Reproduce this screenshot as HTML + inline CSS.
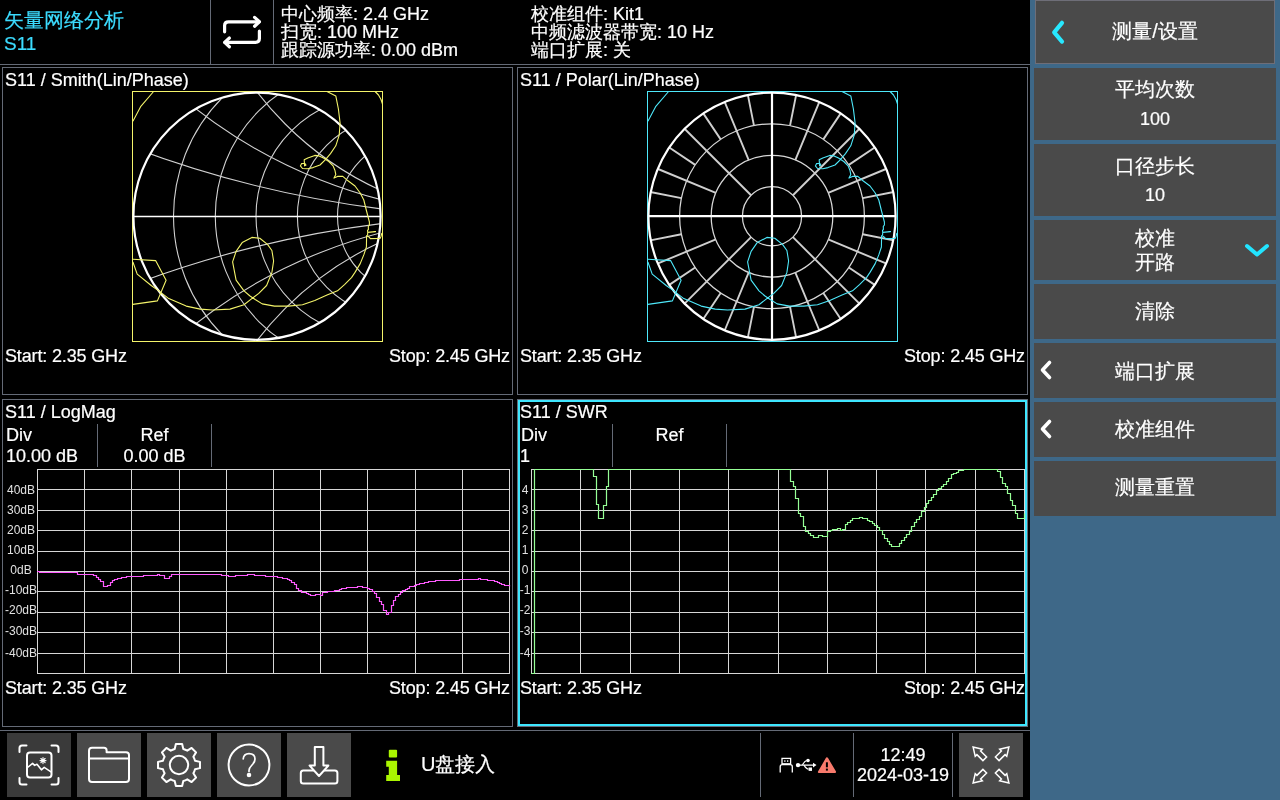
<!DOCTYPE html>
<html><head><meta charset="utf-8">
<style>
*{margin:0;padding:0;box-sizing:border-box}
html,body{width:1280px;height:800px;overflow:hidden;background:#000}
.t,.st,.sv,.lb{will-change:transform}
body{position:relative;font-family:"Liberation Sans",sans-serif;color:#fff;-webkit-text-stroke:0.2px currentColor}
.t{position:absolute;white-space:nowrap;line-height:1}
.hd{font-size:18px;line-height:18px}
.pt{font-size:18px;letter-spacing:-0.15px}
.btn{position:absolute;left:1034px;width:242px;background:#4a4a4a;color:#fff;text-align:center;font-size:19px}
.dv{font-size:18px}
.lb{position:absolute;width:40px;text-align:center;font-size:12px;line-height:12px;color:#e0e0e0;white-space:nowrap;-webkit-text-stroke:0}
.bb{position:absolute;top:733px;width:64px;height:64px;background:#3c3c3c}
svg{position:absolute;left:0;top:0}
.st{position:absolute;left:1034px;width:242px;text-align:center;font-size:20px;line-height:20px;white-space:nowrap}
.sv{position:absolute;left:1034px;width:242px;text-align:center;font-size:18px;line-height:18px;white-space:nowrap}
</style></head>
<body>
<!-- sidebar -->
<div style="position:absolute;left:1030px;top:0;width:250px;height:800px;background:#3e6888"></div>
<div class="btn" style="left:1035px;width:240px;top:0;height:64px;border:1px solid #6e6e78"></div>
<div class="btn" style="top:68px;height:72px"></div>
<div class="btn" style="top:144px;height:72px"></div>
<div class="btn" style="top:220px;height:60px"></div>
<div class="btn" style="top:284px;height:55px"></div>
<div class="btn" style="top:343px;height:55px"></div>
<div class="btn" style="top:402px;height:55px"></div>
<div class="btn" style="top:461px;height:55px"></div>
<div class="st" style="top:21px">测量/设置</div>
<div class="st" style="top:79px">平均次数</div>
<div class="sv" style="top:110px">100</div>
<div class="st" style="top:156px">口径步长</div>
<div class="sv" style="top:186px">10</div>
<div class="st" style="top:228px">校准</div>
<div class="st" style="top:252px">开路</div>
<div class="st" style="top:301px">清除</div>
<div class="st" style="top:361px">端口扩展</div>
<div class="st" style="top:419px">校准组件</div>
<div class="st" style="top:477px">测量重置</div>
<svg width="1280" height="800" viewBox="0 0 1280 800" style="pointer-events:none">
<g fill="none" stroke-linecap="round" stroke-linejoin="round">
<polyline points="1062,22.8 1054.2,32.3 1062,41.6" stroke="#28e8ff" stroke-width="4.2"/>
<polyline points="1247,246 1257,254.5 1267,246" stroke="#22e4ff" stroke-width="4"/>
<polyline points="1049.5,362.5 1042.5,370 1049.5,377.5" stroke="#fff" stroke-width="3.6"/>
<polyline points="1049.5,421.5 1042.5,429 1049.5,436.5" stroke="#fff" stroke-width="3.6"/>
</g>
</svg>

<!-- bottom buttons -->
<div class="bb" style="left:7px;background:#3a3a3a"></div>
<div class="bb" style="left:77px;background:#4a4a4a"></div>
<div class="bb" style="left:147px;background:#4a4a4a"></div>
<div class="bb" style="left:217px;background:#4a4a4a"></div>
<div class="bb" style="left:287px;background:#4a4a4a"></div>
<div class="bb" style="left:959px;background:#4a4a4a"></div>
<svg width="1280" height="800" viewBox="0 0 1280 800">
<g fill="none" stroke="#fff" stroke-width="2" stroke-linecap="round" stroke-linejoin="round">
<!-- screenshot icon -->
<g transform="translate(7,733)">
<path d="M19.5 12.5 H15 Q12.5 12.5 12.5 15 V19"/>
<path d="M44.5 12.5 H49 Q51.5 12.5 51.5 15 V19"/>
<path d="M12.5 45 V49 Q12.5 51.5 15 51.5 H19.5"/>
<path d="M51.5 45 V49 Q51.5 51.5 49 51.5 H44.5"/>
<rect x="20" y="19.5" width="24.5" height="25" rx="3"/>
<path d="M20.5 34.5 L25.6 30.4 L27.6 32.4 L30 31.2 L34.4 36.8 L37.2 34.4 L44 38.8" stroke-width="1.6"/>
<g stroke-width="1.1"><path d="M36 24.6 V30.6 M33 27.6 H39 M33.9 25.5 L38.1 29.7 M38.1 25.5 L33.9 29.7"/></g>
</g>
<!-- folder -->
<g transform="translate(77,733)">
<path d="M12 25.6 V46 Q12 49 15 49 H49 Q52 49 52 46 V22 Q52 19.2 49 19.2 H29.6 V17.5 Q29.6 14.8 27 14.8 H15 Q12 14.8 12 17.8 Z"/>
<path d="M12 25.6 H52"/>
</g>
<!-- gear -->
<g transform="translate(147,733)">
<circle cx="32" cy="32" r="9.2"/>
<path d="M27.70 15.97L28.87 11.03L35.13 11.03L36.30 15.97A16.6 16.6 0 0 1 40.30 17.62L44.61 14.96L49.04 19.39L46.38 23.70A16.6 16.6 0 0 1 48.03 27.70L52.97 28.87L52.97 35.13L48.03 36.30A16.6 16.6 0 0 1 46.38 40.30L49.04 44.61L44.61 49.04L40.30 46.38A16.6 16.6 0 0 1 36.30 48.03L35.13 52.97L28.87 52.97L27.70 48.03A16.6 16.6 0 0 1 23.70 46.38L19.39 49.04L14.96 44.61L17.62 40.30A16.6 16.6 0 0 1 15.97 36.30L11.03 35.13L11.03 28.87L15.97 27.70A16.6 16.6 0 0 1 17.62 23.70L14.96 19.39L19.39 14.96L23.70 17.62A16.6 16.6 0 0 1 27.70 15.97Z"/>
</g>
<!-- help -->
<g transform="translate(217,733)">
<circle cx="32" cy="32" r="20.4"/>
<path d="M26.2 26 Q26.7 20.6 32 20.6 Q38 20.6 38 26 Q38 29 35 32 Q32 35 32 37.5 V38.5" stroke-width="1.7"/>
<circle cx="32" cy="42" r="1.3" fill="#fff"/>
</g>
<!-- download -->
<g transform="translate(287,733)">
<rect x="13.8" y="37.4" width="36.6" height="13" rx="2.5"/>
<path d="M27.8 14 H36.4 V32.6 H41.4 L32 43 L22.6 32.6 H27.8 Z" fill="#4a4a4a"/>
</g>
</g>
<!-- info i -->
<g fill="#aaf500">
<rect x="388.8" y="749.8" width="8.3" height="7.7" rx="1"/>
<path d="M386.2 760.8 H397.1 V775 H400 V781 H386.2 V775 H388.8 V766.8 H386.2 Z"/>
</g>
<!-- usb drive -->
<g fill="none" stroke="#fff" stroke-width="1.3">
<rect x="782" y="758.4" width="8.6" height="5.4"/>
<path d="M780.2 772.5 V766.8 Q780.2 764.7 782.3 764.7 H790.2 Q792.3 764.7 792.3 766.8 V772.5"/>
</g>
<g fill="#fff">
<rect x="784.2" y="760.3" width="1.3" height="1.5"/><rect x="787" y="760.3" width="1.3" height="1.5"/>
<circle cx="798" cy="765.1" r="2.2"/>
<path d="M798 764.5 H813 V762.8 L816.5 765.1 L813 767.4 V765.7 H798 Z"/>
<path d="M802.5 765.1 Q804.5 761 806.5 760.6" fill="none" stroke="#fff" stroke-width="1.2"/>
<path d="M804 765.1 Q806.5 769.2 808.5 769.2" fill="none" stroke="#fff" stroke-width="1.2"/>
<circle cx="808" cy="760.5" r="1.8"/>
<rect x="808.6" y="767.5" width="3.4" height="3.4"/>
</g>
<path d="M826.9 757.2 Q827.6 757.2 828.2 758.3 L836 771.6 Q836.3 773 835 773 H818.8 Q817.5 773 818 771.6 L825.7 758.3 Q826.2 757.2 826.9 757.2 Z" fill="#f87a6c"/>
<rect x="825.9" y="762.3" width="2" height="5" fill="#000"/>
<rect x="825.9" y="768.6" width="2" height="2" fill="#000"/>
<!-- loop icon -->
<g fill="none" stroke="#fff" stroke-width="3.2" stroke-linecap="round" stroke-linejoin="round">
<path d="M224.6 31.8 V25.5 Q224.6 21.8 228.5 21.8 H259"/>
<path d="M254.6 17.4 L259.4 21.8 L254.6 26.2"/>
<path d="M259.4 31.2 V38.6 Q259.4 42.4 255.5 42.4 H225"/>
<path d="M229.4 38 L224.6 42.4 L229.4 46.8"/>
</g>
<!-- fullscreen arrows -->
<g fill="none" stroke="#fff" stroke-width="1.5" stroke-linejoin="miter">
<polygon points="982.94,760.62 976.93,754.61 975.23,756.30 973.11,747.11 982.30,749.23 980.61,750.93 986.62,756.94"/><polygon points="995.38,756.94 1001.39,750.93 999.70,749.23 1008.89,747.11 1006.77,756.30 1005.07,754.61 999.06,760.62"/><polygon points="986.62,773.06 980.61,779.07 982.30,780.77 973.11,782.89 975.23,773.70 976.93,775.39 982.94,769.38"/><polygon points="999.06,769.38 1005.07,775.39 1006.77,773.70 1008.89,782.89 999.70,780.77 1001.39,779.07 995.38,773.06"/>
</g>
</svg>
<div class="t" style="left:421px;top:754px;font-size:20px">U盘接入</div>
<div class="t" style="left:853px;width:100px;text-align:center;top:746px;font-size:18px">12:49</div>
<div class="t" style="left:853px;width:100px;text-align:center;top:766px;font-size:18px">2024-03-19</div>

<svg width="1280" height="800" viewBox="0 0 1280 800">
<g stroke="#646a76" stroke-width="1" fill="none">
<!-- header lines -->
<line x1="0" y1="64.5" x2="1030" y2="64.5"/>
<line x1="210.5" y1="0" x2="210.5" y2="64"/>
<line x1="273.5" y1="0" x2="273.5" y2="64"/>
<!-- panels -->
<rect x="2.5" y="67.5" width="510" height="327"/>
<rect x="517.5" y="67.5" width="510" height="327"/>
<rect x="2.5" y="399.5" width="510" height="327"/>
<rect x="517.5" y="399.5" width="510" height="327"/>
<!-- bottom line -->
<line x1="0" y1="730.5" x2="1030" y2="730.5"/>
<line x1="760.5" y1="733" x2="760.5" y2="797"/>
<line x1="853.5" y1="733" x2="853.5" y2="797"/>
<line x1="952.5" y1="733" x2="952.5" y2="797"/>
<!-- div/ref separators -->
<line x1="97.5" y1="424" x2="97.5" y2="467"/>
<line x1="211.5" y1="424" x2="211.5" y2="467"/>
<line x1="612.5" y1="424" x2="612.5" y2="467"/>
<line x1="726.5" y1="424" x2="726.5" y2="467"/>
</g>
<rect x="519" y="401" width="507" height="324" fill="none" stroke="#3ee6ff" stroke-width="2"/>
<!--CHARTS-->
<defs><clipPath id="cs"><circle cx="257" cy="216.2" r="124"/></clipPath>
<clipPath id="bs"><rect x="132" y="91" width="251" height="251"/></clipPath>
<clipPath id="bp"><rect x="647" y="91" width="251" height="251"/></clipPath></defs>
<rect x="132.5" y="91.5" width="250" height="250" fill="none" stroke="#f4f46a" stroke-width="1"/>
<g clip-path="url(#cs)" fill="none" stroke="#d0d0d0" stroke-width="1.1">
<circle cx="342.0" cy="216.2" r="168.5"/>
<circle cx="364.6" cy="216.2" r="149.3"/>
<circle cx="376.7" cy="216.2" r="120.7"/>
<circle cx="398.0" cy="216.2" r="100.6"/>
<circle cx="416.8" cy="216.2" r="79.3"/>
<circle cx="516.3" cy="-875.5" r="1092.6"/>
<circle cx="516.3" cy="1307.9" r="1092.6"/>
<circle cx="507.3" cy="-291.5" r="507.1"/>
<circle cx="507.3" cy="723.9" r="507.1"/>
<circle cx="517.2" cy="-108.0" r="328.1"/>
<circle cx="517.2" cy="540.4" r="328.1"/>
</g>
<line x1="133" y1="216.5" x2="381" y2="216.5" stroke="#fff" stroke-width="1.6"/>
<circle cx="257" cy="216.2" r="123.6" fill="none" stroke="#fff" stroke-width="2.2"/>
<g clip-path="url(#bs)">
<polyline points="327.0,91.5 335.8,95.9 338.4,109.0 340.1,123.0 339.2,135.2 335.8,145.8 330.5,153.6 325.2,159.8 320.0,165.0 313.0,167.6 307.8,168.8 302.5,168.5 300.4,165.9 301.6,163.6 304.6,163.2 306.0,165.0 304.6,165.9 304.2,159.8 307.8,158.0 314.8,155.4 319.1,155.9 323.5,158.0 328.8,161.5 333.1,165.9 334.9,170.2 335.8,174.6 334.0,178.1 337.5,176.4 342.8,176.4 348.0,180.8 355.0,186.0 360.2,193.0 363.8,200.0 366.4,210.5 369.4,222.0 369.4,225.0 368.3,226.4 368.4,229.5 367.5,230.4 367.7,232.3 375.5,231.6 367.7,232.4 367.6,235.1 366.6,235.8 366.4,247.0 363.8,254.9 360.2,263.6 355.0,272.4 351.5,277.6 344.5,284.6 337.5,290.8 327.0,295.1 314.8,300.4 302.5,304.8 288.5,306.1 274.5,306.1 262.2,303.9 255.2,299.5 250.0,296.0 244.0,290.8 236.1,280.2 232.6,261.9 236.1,251.4 242.2,242.6 251.9,237.4 259.8,238.2 267.5,244.4 271.9,250.5 273.6,261.0 271.9,272.4 266.6,285.5 258.8,293.4 251.8,298.6 244.0,304.8 230.0,309.1 212.5,310.0 200.2,309.1 186.2,306.1 168.8,298.6 157.4,289.9 151.2,285.5 137.2,274.1 132.9,262.0" fill="none" stroke="#f4f46a" stroke-width="1.1" stroke-linejoin="round"/>
<polyline points="132.9,259.2 155.6,260.6 166.1,280.2 157.4,300.9 132.9,304.4" fill="none" stroke="#f4f46a" stroke-width="1.1" stroke-linejoin="round"/>
<polyline points="153.6,91.5 140.6,106.7 132.9,121.3" fill="none" stroke="#f4f46a" stroke-width="1.1" stroke-linejoin="round"/>
<polyline points="375.1,91.5 378.5,95.0 381.0,99.5 382.5,104.0" fill="none" stroke="#f4f46a" stroke-width="1.1" stroke-linejoin="round"/>
<polyline points="367.5,236.0 369.4,237.3 370.3,238.6 380.0,238.4 381.0,236.4 381.9,233.0" fill="none" stroke="#f4f46a" stroke-width="1.1" stroke-linejoin="round"/>
</g>
<rect x="647.5" y="91.5" width="250" height="250" fill="none" stroke="#4ee8fa" stroke-width="1"/>
<g fill="none" stroke="#d8d8d8" stroke-width="1.25">
<circle cx="772.0" cy="216.2" r="29.6"/>
<circle cx="772.0" cy="216.2" r="60.8"/>
<circle cx="772.0" cy="216.2" r="92.4"/>
</g>
<path d="M862.62 198.17L893.62 192.01M828.17 192.93L886.56 168.75M848.83 164.87L875.10 147.31M792.93 195.27L859.68 128.52M823.33 139.37L840.89 113.10M795.27 160.03L819.45 101.64M790.03 125.58L796.19 94.58M753.97 125.58L747.81 94.58M748.73 160.03L724.55 101.64M720.67 139.37L703.11 113.10M751.07 195.27L684.32 128.52M695.17 164.87L668.90 147.31M715.83 192.93L657.44 168.75M681.38 198.17L650.38 192.01M681.38 234.23L650.38 240.39M715.83 239.47L657.44 263.65M695.17 267.53L668.90 285.09M751.07 237.13L684.32 303.88M720.67 293.03L703.11 319.30M748.73 272.37L724.55 330.76M753.97 306.82L747.81 337.82M790.03 306.82L796.19 337.82M795.27 272.37L819.45 330.76M823.33 293.03L840.89 319.30M792.93 237.13L859.68 303.88M848.83 267.53L875.10 285.09M828.17 239.47L886.56 263.65M862.62 234.23L893.62 240.39" stroke="#cfcfcf" stroke-width="1.9" fill="none"/>
<path d="M648 216.2H896M772 92V340" stroke="#fff" stroke-width="2.2"/>
<circle cx="772" cy="216.2" r="123.6" fill="none" stroke="#fff" stroke-width="2.2"/>
<g clip-path="url(#bp)">
<polyline points="842.0,91.5 850.8,95.9 853.4,109.0 855.1,123.0 854.2,135.2 850.8,145.8 845.5,153.6 840.2,159.8 835.0,165.0 828.0,167.6 822.8,168.8 817.5,168.5 815.4,165.9 816.6,163.6 819.6,163.2 821.0,165.0 819.6,165.9 819.2,159.8 822.8,158.0 829.8,155.4 834.1,155.9 838.5,158.0 843.8,161.5 848.1,165.9 849.9,170.2 850.8,174.6 849.0,178.1 852.5,176.4 857.8,176.4 863.0,180.8 870.0,186.0 875.2,193.0 878.8,200.0 881.4,210.5 884.4,222.0 884.4,225.0 883.3,226.4 883.4,229.5 882.5,230.4 882.7,232.3 890.5,231.6 882.7,232.4 882.6,235.1 881.6,235.8 881.4,247.0 878.8,254.9 875.2,263.6 870.0,272.4 866.5,277.6 859.5,284.6 852.5,290.8 842.0,295.1 829.8,300.4 817.5,304.8 803.5,306.1 789.5,306.1 777.2,303.9 770.2,299.5 765.0,296.0 759.0,290.8 751.1,280.2 747.6,261.9 751.1,251.4 757.2,242.6 766.9,237.4 774.8,238.2 782.5,244.4 786.9,250.5 788.6,261.0 786.9,272.4 781.6,285.5 773.8,293.4 766.8,298.6 759.0,304.8 745.0,309.1 727.5,310.0 715.2,309.1 701.2,306.1 683.8,298.6 672.4,289.9 666.2,285.5 652.2,274.1 647.9,262.0" fill="none" stroke="#4ee8fa" stroke-width="1.1" stroke-linejoin="round"/>
<polyline points="647.9,259.2 670.6,260.6 681.1,280.2 672.4,300.9 647.9,304.4" fill="none" stroke="#4ee8fa" stroke-width="1.1" stroke-linejoin="round"/>
<polyline points="668.6,91.5 655.6,106.7 647.9,121.3" fill="none" stroke="#4ee8fa" stroke-width="1.1" stroke-linejoin="round"/>
<polyline points="890.1,91.5 893.5,95.0 896.0,99.5 897.5,104.0" fill="none" stroke="#4ee8fa" stroke-width="1.1" stroke-linejoin="round"/>
<polyline points="882.5,236.0 884.4,237.3 885.3,238.6 895.0,238.4 896.0,236.4 896.9,233.0" fill="none" stroke="#4ee8fa" stroke-width="1.1" stroke-linejoin="round"/>
</g>
<path d="M37.5 469.0V674.0M84.5 469.0V674.0M131.5 469.0V674.0M179.5 469.0V674.0M226.5 469.0V674.0M273.5 469.0V674.0M320.5 469.0V674.0M367.5 469.0V674.0M415.5 469.0V674.0M462.5 469.0V674.0M509.5 469.0V674.0M37.0 469.5H510.0M37.0 489.5H510.0M37.0 510.5H510.0M37.0 530.5H510.0M37.0 551.5H510.0M37.0 571.5H510.0M37.0 591.5H510.0M37.0 612.5H510.0M37.0 632.5H510.0M37.0 653.5H510.0M37.0 673.5H510.0" stroke="#d6d6d6" stroke-width="1" fill="none"/>
<path d="M531.5 469.0V674.0M580.5 469.0V674.0M630.5 469.0V674.0M679.5 469.0V674.0M728.5 469.0V674.0M778.5 469.0V674.0M827.5 469.0V674.0M876.5 469.0V674.0M925.5 469.0V674.0M975.5 469.0V674.0M1024.5 469.0V674.0M531.0 469.5H1025.0M531.0 489.5H1025.0M531.0 510.5H1025.0M531.0 530.5H1025.0M531.0 551.5H1025.0M531.0 571.5H1025.0M531.0 591.5H1025.0M531.0 612.5H1025.0M531.0 632.5H1025.0M531.0 653.5H1025.0M531.0 673.5H1025.0" stroke="#d6d6d6" stroke-width="1" fill="none"/>
<path d="M37.0 571.5H39.5V572.5H41.5H44.5H46.5H48.5H51.5H53.5H55.5H58.5H60.5H62.5H65.5H67.5H70.5H72.5H74.5H77.5V574.5H79.5H81.5H84.5H86.5H88.5H91.5H93.5V575.5H96.5V577.5H98.5V579.5H100.5V581.5H103.5V586.5H105.5H107.5V585.5H110.5V582.5H112.5V580.5H114.5V579.5H117.5V578.5H119.5H121.5V577.5H124.5H126.5V576.5H129.5H131.5H133.5H136.5H138.5H140.5H143.5V575.5H145.5H147.5H150.5H152.5H155.5H157.5V574.5H159.5V575.5H162.5H164.5V578.5H166.5H169.5V576.5H171.5V574.5H173.5H176.5H178.5H180.5H183.5H185.5H188.5H190.5H192.5H195.5H197.5H199.5H202.5H204.5H206.5H209.5H211.5H214.5H216.5H218.5H221.5V575.5H223.5H225.5H228.5V576.5H230.5H232.5H235.5V575.5H237.5H239.5H242.5H244.5H247.5V574.5H249.5H251.5H254.5V575.5H256.5H258.5H261.5H263.5H265.5V576.5H268.5H270.5H273.5H275.5H277.5V577.5H280.5H282.5V578.5H284.5H287.5V579.5H289.5V580.5H291.5V582.5H294.5V584.5H296.5V588.5H298.5V590.5H301.5V592.5H303.5H306.5V593.5H308.5V594.5H310.5V595.5H313.5H315.5V594.5H317.5H320.5V595.5H322.5V592.5H324.5H327.5V591.5H329.5H332.5H334.5V590.5H336.5H339.5V589.5H341.5V588.5H343.5H346.5V587.5H348.5H350.5H353.5H355.5H357.5V586.5H360.5H362.5V587.5H365.5H367.5V588.5H369.5V589.5H372.5V591.5H374.5V593.5H376.5V597.5H379.5V601.5H381.5V604.5H383.5V610.5H386.5V614.5H388.5V612.5H391.5V605.5H393.5V600.5H395.5V596.5H398.5V594.5H400.5V592.5H402.5V590.5H405.5V589.5H407.5V588.5H409.5V586.5H412.5H414.5V585.5H416.5V584.5H419.5V583.5H421.5H424.5V582.5H426.5H428.5V581.5H431.5H433.5H435.5V580.5H438.5H440.5H442.5H445.5H447.5H450.5H452.5H454.5H457.5H459.5V579.5H461.5H464.5H466.5H468.5H471.5H473.5H475.5H478.5V578.5H480.5V579.5H483.5H485.5H487.5V580.5H490.5H492.5H494.5V581.5H497.5V582.5H499.5V583.5H501.5V584.5H504.5V585.5H506.5H509.5V586.5" stroke="#ff5cff" stroke-width="1.2" fill="none"/>
<path d="M531 673.5H534.5V469.5H593.5V476.5H596.5V504.5H598.5V518.5H603.5V505.5H606.5V486.5H608.5V469.5H610.5H613.5H615.5H618.5H620.5H623.5H625.5H628.5H630.5H633.5H635.5H638.5H640.5H643.5H645.5H647.5H650.5H652.5H655.5H657.5H660.5H662.5H665.5H667.5H670.5H672.5H675.5H677.5H679.5H682.5H684.5H687.5H689.5H692.5H694.5H697.5H699.5H702.5H704.5H707.5H709.5H712.5H714.5H716.5H719.5H721.5H724.5H726.5H729.5H731.5H734.5H736.5H739.5H741.5H744.5H746.5H749.5H751.5H753.5H756.5H758.5H761.5H763.5H766.5H768.5H771.5H773.5H776.5H778.5H781.5H783.5H785.5H788.5H790.5V481.5H793.5V486.5H795.5V498.5H798.5V513.5H800.5V516.5H803.5V526.5H805.5V531.5H808.5V533.5H810.5V535.5H813.5V537.5H815.5H818.5V535.5H820.5H822.5V536.5H825.5H827.5V531.5H830.5V530.5H832.5V529.5H835.5H837.5V528.5H840.5V530.5H842.5V529.5H845.5V524.5H847.5V522.5H850.5V520.5H852.5V518.5H855.5H857.5H859.5V517.5H862.5V518.5H864.5H867.5V520.5H869.5V521.5H872.5V523.5H874.5V525.5H877.5V527.5H879.5V530.5H882.5V534.5H884.5V538.5H887.5V541.5H889.5V544.5H891.5V546.5H894.5H896.5H899.5V543.5H901.5V540.5H904.5V537.5H906.5V534.5H909.5V531.5H911.5V526.5H914.5V522.5H916.5V519.5H919.5V516.5H921.5V511.5H924.5V507.5H926.5V503.5H928.5V500.5H931.5V497.5H933.5V494.5H936.5V490.5H938.5V488.5H941.5V486.5H943.5V484.5H946.5V481.5H948.5V478.5H951.5V474.5H953.5V473.5H956.5V472.5H958.5V470.5H960.5H963.5V469.5H965.5H968.5H970.5H973.5H975.5H978.5H980.5H983.5H985.5H988.5H990.5H993.5H995.5H997.5V471.5H1000.5V477.5H1002.5V483.5H1005.5V486.5H1007.5V493.5H1010.5V500.5H1012.5V505.5H1015.5V513.5H1017.5V518.5H1020.5H1022.5H1024.5V513.5" stroke="#96ff96" stroke-width="1.2" fill="none"/>
<!--/CHARTS-->
</svg>

<!-- header text -->
<div class="t" style="left:4px;top:10px;font-size:20px;color:#3cdcff">矢量网络分析</div>
<div class="t" style="left:4px;top:34px;font-size:19px;color:#3cdcff">S11</div>
<div class="t hd" style="left:281px;top:5px">中心频率: 2.4 GHz</div>
<div class="t hd" style="left:281px;top:23px">扫宽: 100 MHz</div>
<div class="t hd" style="left:281px;top:41px">跟踪源功率: 0.00 dBm</div>
<div class="t hd" style="left:531px;top:5px">校准组件: Kit1</div>
<div class="t hd" style="left:531px;top:23px">中频滤波器带宽: 10 Hz</div>
<div class="t hd" style="left:531px;top:41px">端口扩展: 关</div>

<!-- panel text -->
<div class="t pt" style="left:5px;top:71px;letter-spacing:0">S11 / Smith(Lin/Phase)</div>
<div class="t pt" style="left:520px;top:71px;letter-spacing:0">S11 / Polar(Lin/Phase)</div>
<div class="t pt" style="left:5px;top:403px;letter-spacing:0">S11 / LogMag</div>
<div class="t pt" style="left:520px;top:403px;letter-spacing:0">S11 / SWR</div>
<div class="t pt" style="left:5px;top:347px">Start: 2.35 GHz</div>
<div class="t pt" style="right:770px;top:347px">Stop: 2.45 GHz</div>
<div class="t pt" style="left:520px;top:347px">Start: 2.35 GHz</div>
<div class="t pt" style="right:255px;top:347px">Stop: 2.45 GHz</div>
<div class="t pt" style="left:5px;top:679px">Start: 2.35 GHz</div>
<div class="t pt" style="right:770px;top:679px">Stop: 2.45 GHz</div>
<div class="t pt" style="left:520px;top:679px">Start: 2.35 GHz</div>
<div class="t pt" style="right:255px;top:679px">Stop: 2.45 GHz</div>

<!-- div/ref -->
<div class="t dv" style="left:6px;top:426px">Div</div>
<div class="t dv" style="left:6px;top:447px">10.00 dB</div>
<div class="t dv" style="left:98px;width:113px;text-align:center;top:426px">Ref</div>
<div class="t dv" style="left:98px;width:113px;text-align:center;top:447px">0.00 dB</div>
<div class="t dv" style="left:521px;top:426px">Div</div>
<div class="t dv" style="left:520px;top:447px">1</div>
<div class="t dv" style="left:613px;width:113px;text-align:center;top:426px">Ref</div>
<div class="lb" style="left:1px;top:484px">40dB</div>
<div class="lb" style="left:505px;top:484px">4</div>
<div class="lb" style="left:1px;top:504px">30dB</div>
<div class="lb" style="left:505px;top:504px">3</div>
<div class="lb" style="left:1px;top:524px">20dB</div>
<div class="lb" style="left:505px;top:524px">2</div>
<div class="lb" style="left:1px;top:544px">10dB</div>
<div class="lb" style="left:505px;top:544px">1</div>
<div class="lb" style="left:1px;top:564px">0dB</div>
<div class="lb" style="left:505px;top:564px">0</div>
<div class="lb" style="left:1px;top:584px">-10dB</div>
<div class="lb" style="left:505px;top:584px">-1</div>
<div class="lb" style="left:1px;top:604px">-20dB</div>
<div class="lb" style="left:505px;top:604px">-2</div>
<div class="lb" style="left:1px;top:625px">-30dB</div>
<div class="lb" style="left:505px;top:625px">-3</div>
<div class="lb" style="left:1px;top:647px">-40dB</div>
<div class="lb" style="left:505px;top:647px">-4</div>

</body></html>
